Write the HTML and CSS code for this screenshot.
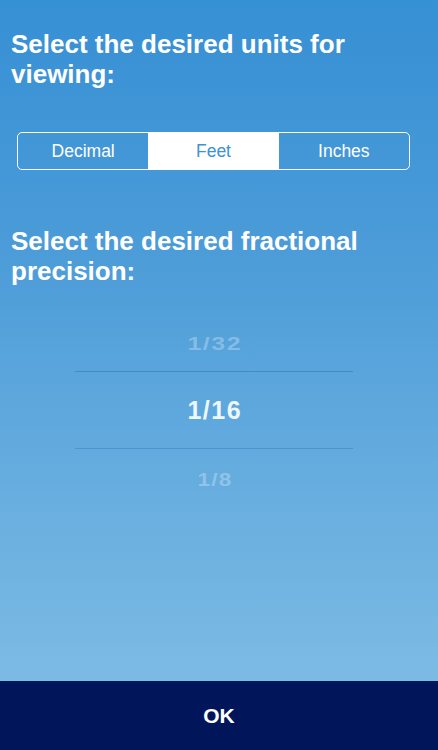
FILE: index.html
```html
<!DOCTYPE html>
<html>
<head>
<meta charset="utf-8">
<link rel="stylesheet" href="styles.css">
</head>
<body>
<div class="screen">
  <main class="content">
    <h1 class="title title-units">Select the desired units for viewing:</h1>
    <div class="segmented">
      <div class="seg">Decimal</div>
      <div class="seg seg-active">Feet</div>
      <div class="seg">Inches</div>
    </div>
    <h1 class="title title-precision">Select the desired fractional precision:</h1>
    <div class="picker">
      <div class="pick pick-top"><span>1/32</span></div>
      <div class="pick pick-center"><span>1/16</span></div>
      <div class="pick pick-bottom"><span>1/8</span></div>
    </div>
  </main>
  <footer class="ok-bar">OK</footer>
</div>
</body>
</html>
```
FILE: styles.css
```css
* { box-sizing: border-box; }
html, body { margin: 0; padding: 0; }
body {
  width: 438px;
  height: 750px;
  overflow: hidden;
  font-family: "Liberation Sans", Arial, sans-serif;
}
.screen {
  display: flex;
  flex-direction: column;
  height: 750px;
}
.content {
  flex: 1;
  display: flex;
  flex-direction: column;
  background: linear-gradient(180deg, #3690d4 0%, #4a9bd8 35%, #62aade 65%, #7cbbe4 100%);
}
.title {
  margin: 0;
  padding-left: 11px;
  padding-right: 60px;
  color: #ffffff;
  font-size: 26px;
  line-height: 30px;
  font-weight: bold;
}
.title-units { margin-top: 29px; }
.segmented {
  display: flex;
  margin: 43px 28px 0 17px;
  height: 38px;
  border: 1.5px solid #ffffff;
  border-radius: 5px;
  overflow: hidden;
}
.seg {
  flex: 1;
  display: flex;
  align-items: center;
  justify-content: center;
  color: #ffffff;
  font-size: 17.5px;
}
.seg-active {
  background: #ffffff;
  color: #3b93d5;
}
.title-precision { margin-top: 56px; }
.picker {
  margin: 29px 0 0 75px;
  width: 278px;
  display: flex;
  flex-direction: column;
}
.pick {
  display: flex;
  align-items: center;
  justify-content: center;
  color: #ffffff;
  font-size: 25px;
  letter-spacing: 1.5px;
}
.pick span { padding-left: 1.5px; }
.pick-top, .pick-bottom {
  height: 56px;
  color: rgba(255, 255, 255, 0.28);
}
.pick-top span, .pick-bottom span {
  display: inline-block;
  transform: scaleY(0.74);
  font-weight: bold;
}
.pick-bottom { padding-top: 4px; }
.pick-bottom span { transform: scale(0.9, 0.74); }
.pick-center {
  height: 78px;
  border-top: 1px solid #3f8fc6;
  border-bottom: 1px solid #4896cc;
  color: #eef7fd;
  font-weight: bold;
}
.ok-bar {
  height: 69px;
  flex: none;
  background: #00155a;
  color: #ffffff;
  display: flex;
  align-items: center;
  justify-content: center;
  font-size: 21px;
  font-weight: bold;
}
```
